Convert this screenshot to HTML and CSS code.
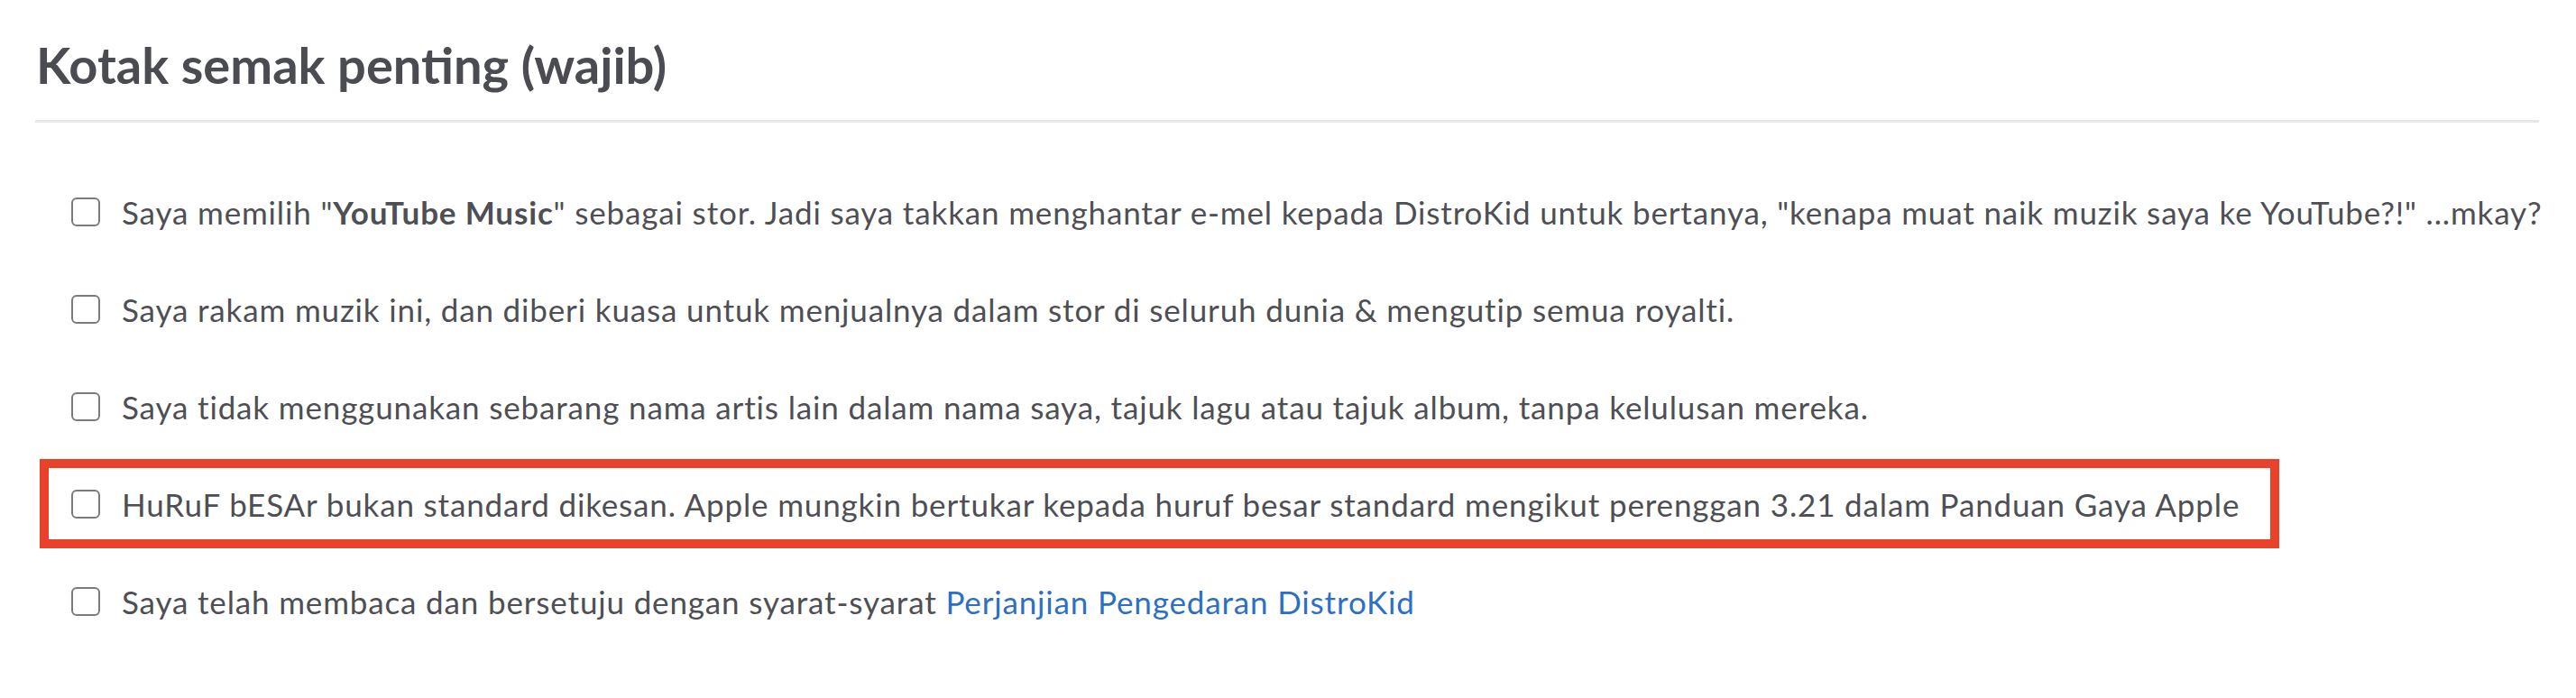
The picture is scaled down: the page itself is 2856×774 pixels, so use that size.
FILE: index.html
```html
<!DOCTYPE html>
<html lang="ms">
<head>
    <meta charset="UTF-8">
    <meta name="viewport" content="width=device-width, initial-scale=1.0">
    <title>Kotak semak penting</title>
    <link rel="stylesheet" href="styles.css">
</head>
<body>

<div class="section">
    <h2 class="section-title">Kotak semak penting (wajib)</h2>

    <div class="checklist">
        <label class="check-row">
            <input type="checkbox" class="check-box">
            <span class="check-text">Saya memilih "<strong>YouTube Music</strong>" sebagai stor. Jadi saya takkan menghantar e-mel kepada DistroKid untuk bertanya, "kenapa muat naik muzik saya ke YouTube?!" ...mkay?</span>
        </label>
        <label class="check-row">
            <input type="checkbox" class="check-box">
            <span class="check-text">Saya rakam muzik ini, dan diberi kuasa untuk menjualnya dalam stor di seluruh dunia &amp; mengutip semua royalti.</span>
        </label>
        <label class="check-row">
            <input type="checkbox" class="check-box">
            <span class="check-text">Saya tidak menggunakan sebarang nama artis lain dalam nama saya, tajuk lagu atau tajuk album, tanpa kelulusan mereka.</span>
        </label>
        <!-- baris yang ditanda merah -->
        <label class="check-row highlighted">
            <input type="checkbox" class="check-box">
            <span class="check-text">HuRuF bESAr bukan standard dikesan. Apple mungkin bertukar kepada huruf besar standard mengikut perenggan 3.21 dalam Panduan Gaya Apple</span>
        </label>
        <label class="check-row">
            <input type="checkbox" class="check-box">
            <span class="check-text">Saya telah membaca dan bersetuju dengan syarat-syarat <a href="#" class="check-link">Perjanjian Pengedaran DistroKid</a></span>
        </label>
    </div>
</div>

</body>
</html>
```

FILE: styles.css
```css
* {
    margin: 0;
    padding: 0;
    box-sizing: border-box;
}

body {
    font-family: Lato, "Open Sans", sans-serif;
    background-color: #fff;
    color: #4e4f54;
}

.section {
    padding: 38px 41px 0 39px;
}

.section-title {
    font-size: 56px;
    font-weight: 700;
    line-height: 1.2;
    color: #4b4c51;
    padding-left: 1px;
    padding-bottom: 28px;
    border-bottom: 3px solid #e6e6eb;
}

.checklist {
    display: flex;
    flex-direction: column;
    align-items: flex-start;
    gap: 9px;
    padding-top: 49px;
    padding-left: 5px;
}

.check-row {
    display: flex;
    align-items: center;
    gap: 24px;
    height: 99px;
    padding: 0 34px 0 25px;
    border: 10px solid transparent;
    cursor: pointer;
}

.check-row.highlighted {
    border-color: #e9412a;
}

.check-box {
    appearance: none;
    -webkit-appearance: none;
    flex-shrink: 0;
    width: 32px;
    height: 32px;
    border: 2px solid #7b7b7b;
    border-radius: 6px;
    background-color: #fff;
}

.check-text {
    font-size: 35px;
    letter-spacing: 0.85px;
    line-height: 1.2;
    white-space: nowrap;
}

.check-text strong {
    font-weight: 700;
}

.check-link {
    color: #2d6fc5;
    text-decoration: none;
}
```
